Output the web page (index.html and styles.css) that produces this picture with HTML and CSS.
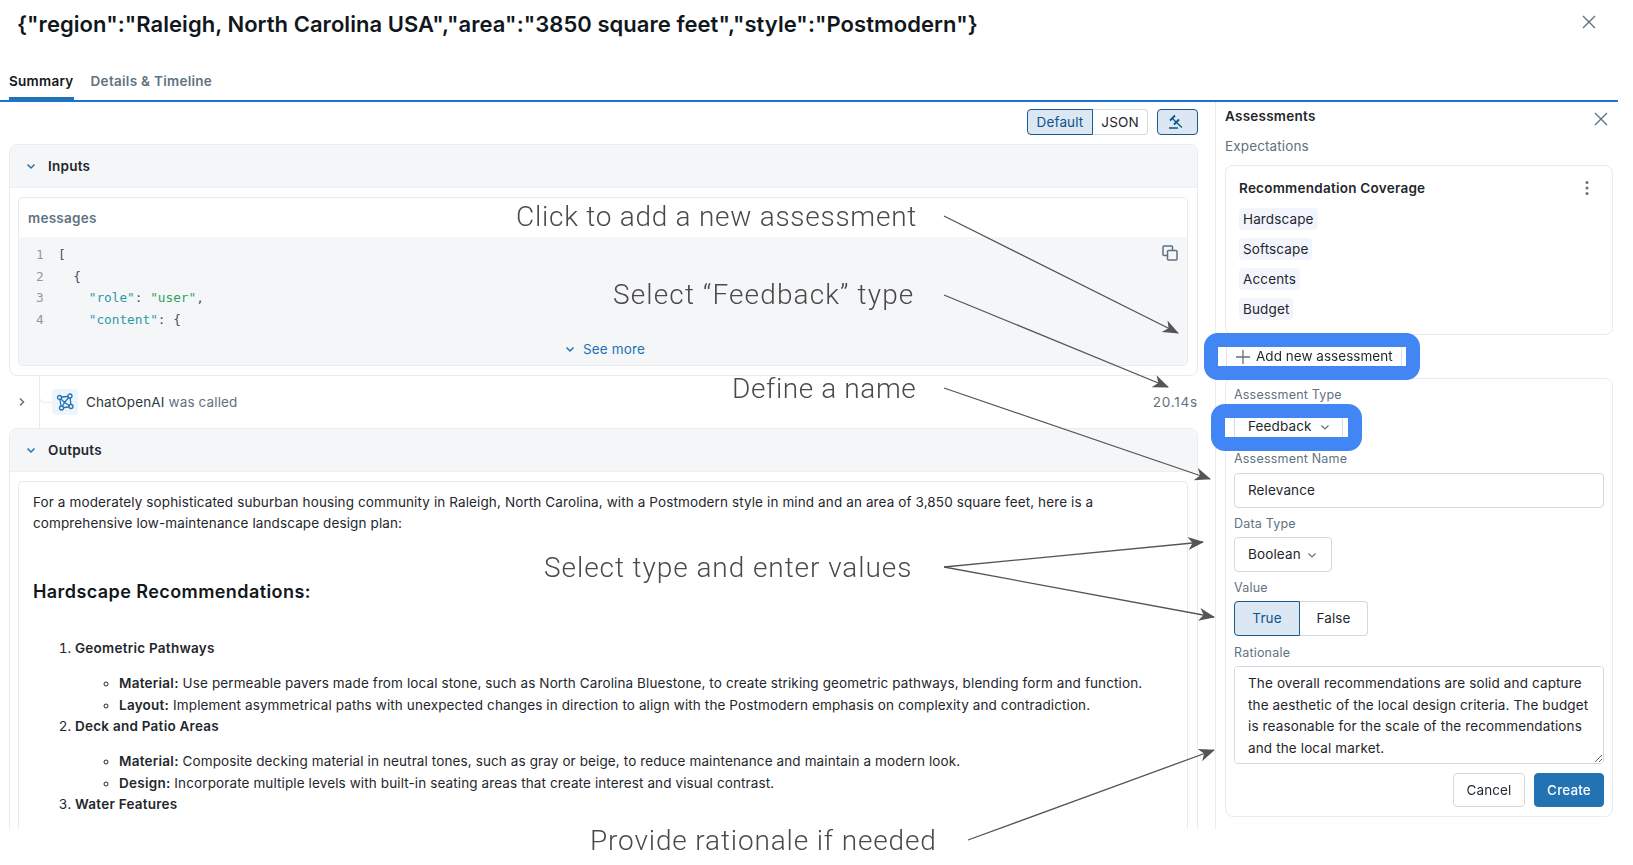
FILE: index.html
```html
<!DOCTYPE html>
<html lang="en">
<head>
<meta charset="utf-8">
<title>Assessments</title>
<link rel="stylesheet" href="styles.css">
</head>
<body>
<div class="modal">
  <header class="modal-head">
    <h1 class="title">{"region":"Raleigh, North Carolina USA","area":"3850 square feet","style":"Postmodern"}</h1>
    <button class="icon-btn close-main" aria-label="Close"><svg width="16" height="16" viewBox="0 0 16 16"><path d="M2 2l12 12M14 2L2 14"/></svg></button>
  </header>
  <nav class="tabs">
    <a class="tab active">Summary</a>
    <a class="tab">Details &amp; Timeline</a>
  </nav>
  <div class="content">
    <main class="trace">
      <div class="toolbar">
        <div class="seg">
          <span class="seg-item on">Default</span><span class="seg-item">JSON</span>
        </div>
        <button class="gavel" aria-label="Assessments"><svg width="16" height="16" viewBox="0 0 16 16"><path d="M1 14h9M8.500 8.500l5.500 5"/><path class="thick" d="M2 6.500L7 1.500M6 10.500l5-5"/><path d="M4.500 4.500l3.500 3.500"/></svg></button>
      </div>
      <section class="section">
        <div class="sec-head"><svg class="chev" width="10" height="10" viewBox="0 0 10 10"><path d="M1.500 3.500L5 7l3.500-3.500"/></svg>Inputs</div>
        <div class="sec-body">
          <div class="msg-card">
            <div class="msg-head">messages</div>
            <div class="code">
              <svg class="copy" width="16" height="16" viewBox="0 0 16 16"><rect x="1" y="1" width="9.500" height="9.500" rx="1"/><rect class="front" x="5.500" y="5.500" width="9.500" height="9.500" rx="1"/></svg>
              <div class="code-line"><span class="ln">1</span><span>[</span></div>
              <div class="code-line"><span class="ln">2</span><span>&nbsp;&nbsp;{</span></div>
              <div class="code-line"><span class="ln">3</span><span>&nbsp;&nbsp;&nbsp;&nbsp;<span class="key">"role"</span>: <span class="str">"user"</span>,</span></div>
              <div class="code-line"><span class="ln">4</span><span>&nbsp;&nbsp;&nbsp;&nbsp;<span class="key">"content"</span>: {</span></div>
              <div class="see-more"><svg class="chev" width="10" height="10" viewBox="0 0 10 10"><path d="M1.500 3.500L5 7l3.500-3.500"/></svg>See more</div>
            </div>
          </div>
        </div>
      </section>
      <div class="span-row">
        <svg class="chev-r" width="10" height="10" viewBox="0 0 10 10"><path d="M3 1.500L6.500 5 3 8.500"/></svg>
        <div class="rail"></div>
        <div class="span-icon"><svg width="18" height="18" viewBox="0 0 18 18"><path d="M3.500 4.500L14 3M3.500 4.500l5 5M14 3L8.500 9.500M14 3l1 10.500M8.500 9.500l6.500 4M8.500 9.500L5.500 15M15 13.500L5.500 15M3.500 4.500l2 10.500"/><circle cx="3.500" cy="4.500" r="2"/><circle cx="14" cy="3" r="2"/><circle cx="15" cy="13.500" r="2"/><circle cx="5.500" cy="15" r="2"/></svg></div>
        <span class="span-name">ChatOpenAI</span><span class="span-verb">was called</span>
        <span class="span-time">20.14s</span>
      </div>
      <section class="section">
        <div class="sec-head"><svg class="chev" width="10" height="10" viewBox="0 0 10 10"><path d="M1.500 3.500L5 7l3.500-3.500"/></svg>Outputs</div>
        <div class="sec-body">
          <article class="output">
            <p>For a moderately sophisticated suburban housing community in Raleigh, North Carolina, with a Postmodern style in mind and an area of 3,850 square feet, here is a comprehensive low-maintenance landscape design plan:</p>
            <h3>Hardscape Recommendations:</h3>
            <ol>
              <li><strong>Geometric Pathways</strong>
                <ul>
                  <li><strong>Material:</strong> Use permeable pavers made from local stone, such as North Carolina Bluestone, to create striking geometric pathways, blending form and function.</li>
                  <li><strong>Layout:</strong> Implement asymmetrical paths with unexpected changes in direction to align with the Postmodern emphasis on complexity and contradiction.</li>
                </ul>
              </li>
              <li><strong>Deck and Patio Areas</strong>
                <ul>
                  <li><strong>Material:</strong> Composite decking material in neutral tones, such as gray or beige, to reduce maintenance and maintain a modern look.</li>
                  <li><strong>Design:</strong> Incorporate multiple levels with built-in seating areas that create interest and visual contrast.</li>
                </ul>
              </li>
              <li><strong>Water Features</strong></li>
            </ol>
          </article>
        </div>
      </section>
    </main>
    <aside class="panel">
      <div class="panel-head">
        <span class="panel-title">Assessments</span>
        <button class="icon-btn close-panel" aria-label="Close"><svg width="14" height="14" viewBox="0 0 14 14"><path d="M1 1l12 12M13 1L1 13"/></svg></button>
      </div>
      <div class="panel-sub">Expectations</div>
      <div class="card exp-card">
        <div class="exp-head">
          <span class="exp-name">Recommendation Coverage</span>
          <svg class="kebab" width="4" height="16" viewBox="0 0 4 16"><circle cx="2" cy="2.500" r="1.500"/><circle cx="2" cy="8" r="1.500"/><circle cx="2" cy="13.500" r="1.500"/></svg>
        </div>
        <div class="tags">
          <span class="tag">Hardscape</span>
          <span class="tag">Softscape</span>
          <span class="tag">Accents</span>
          <span class="tag">Budget</span>
        </div>
      </div>
      <div class="hl hl-add">
        <div class="hl-inner add-inner">
          <svg class="plus" width="16" height="16" viewBox="0 0 16 16"><path d="M8 1v14M1 8h14"/></svg>Add new assessment
        </div>
      </div>
      <form class="card form-card">
        <label class="lbl">Assessment Type</label>
        <div class="hl hl-type">
          <div class="hl-inner type-inner">Feedback<svg class="chev-g" width="10" height="10" viewBox="0 0 10 10"><path d="M1.500 3.500L5 7l3.500-3.500"/></svg></div>
        </div>
        <label class="lbl after-hl">Assessment Name</label>
        <div class="field name-field">Relevance</div>
        <label class="lbl next">Data Type</label>
        <div class="field select-field">Boolean<svg class="chev-g" width="10" height="10" viewBox="0 0 10 10"><path d="M1.500 3.500L5 7l3.500-3.500"/></svg></div>
        <label class="lbl next">Value</label>
        <div class="value-seg"><span class="val on">True</span><span class="val">False</span></div>
        <label class="lbl next rat">Rationale</label>
        <textarea class="rationale" spellcheck="false">The overall recommendations are solid and capture the aesthetic of the local design criteria. The budget is reasonable for the scale of the recommendations and the local market.</textarea>
        <div class="actions">
          <button type="button" class="btn">Cancel</button>
          <button type="button" class="btn primary">Create</button>
        </div>
      </form>
    </aside>
  </div>
</div>

<svg class="arrows" width="1633" height="865" viewBox="0 0 1633 865">
  <defs>
    <marker id="head" markerUnits="userSpaceOnUse" markerWidth="16" markerHeight="14" viewBox="0 0 16 14" refX="15" refY="7" orient="auto">
      <path d="M0 0.500L16 7 0 13.500 4.500 7z"/>
    </marker>
  </defs>
  <path d="M944 216L1178 333"/>
  <path d="M944 295L1168 387"/>
  <path d="M944 388L1210 479"/>
  <path d="M944 567L1203 542"/>
  <path d="M944 567L1214 617"/>
  <path d="M968 840L1214 750"/>
</svg>
<div class="note n1">Click to add a new assessment</div>
<div class="note n2">Select “Feedback” type</div>
<div class="note n3">Define a name</div>
<div class="note n4">Select type and enter values</div>
<div class="note n5">Provide rationale if needed</div>
</body>
</html>
```
FILE: styles.css
```css
* { box-sizing: border-box; }
html, body { margin: 0; padding: 0; }
body {
  width: 1633px;
  height: 865px;
  overflow: hidden;
  position: relative;
  background: #fff;
  color: #1f272d;
  font-family: Inter, "Liberation Sans", sans-serif;
  font-size: 13.500px;
  letter-spacing: .13px;
  line-height: 20px;
}
button { font: inherit; color: inherit; background: none; border: 0; padding: 0; letter-spacing: inherit; }
svg path, svg circle, svg rect { fill: none; }

.modal {
  width: 1618px;
  height: 829px;
  overflow: hidden;
  display: flex;
  flex-direction: column;
}
.modal-head {
  height: 59px;
  flex: none;
  display: flex;
  justify-content: space-between;
  padding: 8px 0 0 17px;
}
.title { margin: 0; font-size: 22px; line-height: 32px; font-weight: 600; letter-spacing: .04px; color: #11171c; }
.icon-btn svg path { stroke: #5f7281; stroke-width: 1.400; }
.close-main { height: 32px; margin-right: 21px; }

.tabs {
  height: 43px;
  flex: none;
  display: flex;
  gap: 17px;
  padding-left: 9px;
  border-bottom: 2px solid #1a73d1;
}
.tab {
  height: 41px;
  padding-top: 12px;
  font-weight: 600;
  letter-spacing: .28px;
  color: #5f7281;
}
.tab.active { color: #11171c; border-bottom: 3px solid #2272b4; }

.content { flex: 1; min-height: 0; display: flex; }

.trace {
  width: 1216px;
  flex: none;
  border-right: 1px solid #e8ecf0;
  padding: 7px 17px 0 9px;
  overflow: hidden;
}
.toolbar { display: flex; justify-content: flex-end; gap: 9px; height: 26px; margin-bottom: 9px; }
.seg { display: flex; height: 26px; }
.seg-item {
  width: 55px;
  border: 1px solid #d1d9e1;
  border-left: 0;
  border-radius: 0 4px 4px 0;
  line-height: 24px;
  text-align: center;
}
.seg-item.on {
  width: 66px;
  background: #dbe7f2;
  border: 1px solid #1b5a8c;
  border-radius: 4px 0 0 4px;
  color: #0e538b;
}
.gavel {
  width: 41px;
  height: 26px;
  background: #dbe7f2;
  border: 1px solid #1b5a8c;
  border-radius: 4px;
  display: flex;
  align-items: center;
  justify-content: center;
  padding-right: 3px;
}
.gavel svg path { stroke: #0e538b; stroke-width: 1.300; }
.gavel svg path.thick { stroke-width: 1.800; }

.section { border: 1px solid #e8ecf0; border-radius: 8px 8px 0 0; }
.section:first-of-type { border-radius: 8px; }
.sec-head {
  height: 43px;
  background: #f5f6f8;
  border-bottom: 1px solid #eef0f3;
  border-radius: 8px 8px 0 0;
  display: flex;
  align-items: center;
  gap: 12px;
  padding-left: 16px;
  font-weight: 600;
  letter-spacing: .25px;
}
.chev path { stroke: #2272b4; stroke-width: 1.500; }
.chev-r path { stroke: #5f7281; stroke-width: 1.500; }
.chev-g path { stroke: #5f7281; stroke-width: 1.200; }
.sec-body { padding: 9px 9px 9px 8px; }

.msg-card { border: 1px solid #e8ecf0; border-radius: 4px; }
.msg-head { height: 39px; line-height: 40px; padding-left: 9px; color: #5f7281; font-weight: 600; letter-spacing: .25px; }
.code {
  position: relative;
  height: 128px;
  background: #f5f6f8;
  padding-top: 7px;
  font-family: "DejaVu Sans Mono", monospace;
  font-size: 12.750px;
  letter-spacing: 0;
  line-height: 21.500px;
  color: #44525e;
}
.code-line { display: flex; }
.ln { width: 39px; padding-left: 17px; color: #8c9aa6; flex: none; }
.key { color: #2b9aa8; }
.str { color: #2fa35a; }
.copy { position: absolute; right: 9px; top: 8px; }
.copy rect { stroke: #5f7281; stroke-width: 1.500; }
.copy rect.front { fill: #f5f6f8; }
.see-more {
  display: flex;
  align-items: center;
  justify-content: center;
  gap: 8px;
  margin-top: 9px;
  padding-left: 4px;
  font-family: Inter, "Liberation Sans", sans-serif;
  font-size: 13.500px;
  letter-spacing: .13px;
  line-height: 20px;
  color: #2272b4;
}

.span-row { height: 52px; display: flex; align-items: center; position: relative; padding-left: 8px; }
.rail { width: 1px; height: 52px; background: #e8ecf0; margin: 0 12px 0 12px; position: relative; }
.rail::after {
  content: "";
  position: absolute;
  left: 0;
  top: 17px;
  width: 12px;
  height: 9px;
  border-bottom: 1px solid #e8ecf0;
  border-left: 1px solid #e8ecf0;
  border-radius: 0 0 0 6px;
}
.span-icon {
  width: 26px;
  height: 26px;
  background: #edf5fb;
  border-radius: 4px;
  display: flex;
  align-items: center;
  justify-content: center;
  margin-right: 8px;
}
.span-icon svg path { stroke: #2272b4; stroke-width: 1.300; }
.span-icon svg circle { fill: #edf5fb; stroke: #2272b4; stroke-width: 1.300; }
.span-name { color: #2f3941; margin-right: 4px; }
.span-verb { color: #5f7281; }
.span-time { margin-left: auto; color: #5f7281; letter-spacing: .8px; }

.output {
  border: 1px solid #e8ecf0;
  border-radius: 4px;
  padding: 10px 13px 60px 14px;
  line-height: 21.500px;
  letter-spacing: .115px;
  height: 420px;
}
.output p { margin: 0; line-height: 21px; }
.output h3 { margin: 45px 0 33px; font-size: 18px; line-height: 26px; font-weight: 600; letter-spacing: .42px; color: #11171c; }
.output ol { margin: 0; padding-left: 42px; }
.output ul { margin: 13.500px 0 0; padding-left: 44px; list-style: circle; }
.output strong { font-weight: 600; letter-spacing: .25px; }

.panel { flex: 1; min-width: 0; padding: 4px 5px 0 9px; }
.panel-head { display: flex; justify-content: space-between; align-items: center; height: 20px; }
.panel-title { font-weight: 600; letter-spacing: .25px; }
.close-panel { height: 14px; margin-right: 5px; margin-top: 4px; }
.panel-sub { margin-top: 10px; color: #5f7281; }
.card { border: 1px solid #e8ecf0; border-radius: 8px; background: #fff; }
.exp-card { margin-top: 9px; height: 170px; padding: 12px 13px; }
.exp-head { display: flex; justify-content: space-between; align-items: center; height: 20px; padding-right: 10px; }
.exp-name { font-weight: 600; letter-spacing: .25px; }
.kebab circle { fill: #5f7281; }
.tags { display: flex; flex-direction: column; align-items: flex-start; gap: 8px; margin-top: 10px; }
.tag { height: 22px; line-height: 23px; padding: 0 4px; background: #f2f5fc; border-radius: 4px; }

.hl {
  position: relative;
  z-index: 1;
  border: 14px solid #4285f4;
  border-radius: 14px;
  height: 47px;
  background: #fff;
}
.hl-add { width: 216px; margin: -2px 0 -2px -21px; }
.hl-type { width: 151px; margin: -1px 0 -2px -23px; }
.hl-inner { height: 19px; display: flex; align-items: center; background: #fff; line-height: 19px; }
.add-inner { margin-left: 8px; margin-right: 4px; border-left: 1px solid #dfe5ea; border-right: 1px solid #dfe5ea; padding-left: 8px; gap: 5px; letter-spacing: .03px; }
.plus path { stroke: #5f7281; stroke-width: 1.300; }
.type-inner { margin-left: 9px; margin-right: 5px; border-left: 1px solid #d5dde4; border-right: 1px solid #d5dde4; padding: 0 0 2px 13px; gap: 8px; }

.form-card { height: 439px; padding: 6px 8px 8px; display: flex; flex-direction: column; }
.lbl { display: block; height: 20px; font-size: 12.500px; letter-spacing: .2px; line-height: 20px; color: #5f7281; flex: none; }
.after-hl { margin-top: 0; }
.next { margin-top: 6px; }
.rat { margin-top: 7px; }
.field {
  border: 1px solid #cfd8e0;
  border-radius: 4px;
  height: 35px;
  line-height: 33px;
  padding: 0 13px;
  margin-top: 4px;
  flex: none;
}
.select-field { width: 98px; margin-top: 3px; display: flex; align-items: center; gap: 6px; }
.value-seg { display: flex; height: 35px; margin-top: 3px; flex: none; }
.val {
  width: 68px;
  border: 1px solid #cfd8e0;
  border-left: 0;
  border-radius: 0 4px 4px 0;
  line-height: 33px;
  text-align: center;
}
.val.on {
  width: 66px;
  background: #dbe7f2;
  border: 1px solid #1b5a8c;
  border-radius: 4px 0 0 4px;
  color: #0e538b;
}
.rationale {
  display: block;
  width: 100%;
  height: 98px;
  margin-top: 3px;
  border: 1px solid #cfd8e0;
  border-radius: 4px;
  padding: 6px 12px 6px 13px;
  font: inherit;
  letter-spacing: inherit;
  line-height: 21.500px;
  color: #1f272d;
  outline: none;
  flex: none;
}
.actions { display: flex; justify-content: flex-end; gap: 9px; margin-top: 9px; }
.btn {
  width: 72px;
  height: 34px;
  border: 1px solid #cfd8e0;
  border-radius: 4px;
}
.btn.primary { width: 70px; background: #2272b4; border-color: #2272b4; color: #fff; font-weight: 500; }

.arrows { position: absolute; left: 0; top: 0; pointer-events: none; }
.arrows path { stroke: #555; stroke-width: 1.300; marker-end: url(#head); }
.arrows marker path { fill: #555; stroke: none; }

.note {
  position: absolute;
  font-family: Roboto, sans-serif;
  font-weight: 300;
  font-size: 28px;
  line-height: 36px;
  letter-spacing: .6px;
  color: #4a4a4a;
  white-space: nowrap;
}
.n1 { left: 516px; top: 199px; letter-spacing: .74px; }
.n2 { left: 613px; top: 277px; letter-spacing: 1.120px; }
.n3 { left: 732px; top: 371px; }
.n4 { left: 544px; top: 550px; letter-spacing: .93px; }
.n5 { left: 590px; top: 823px; letter-spacing: .85px; }
```
